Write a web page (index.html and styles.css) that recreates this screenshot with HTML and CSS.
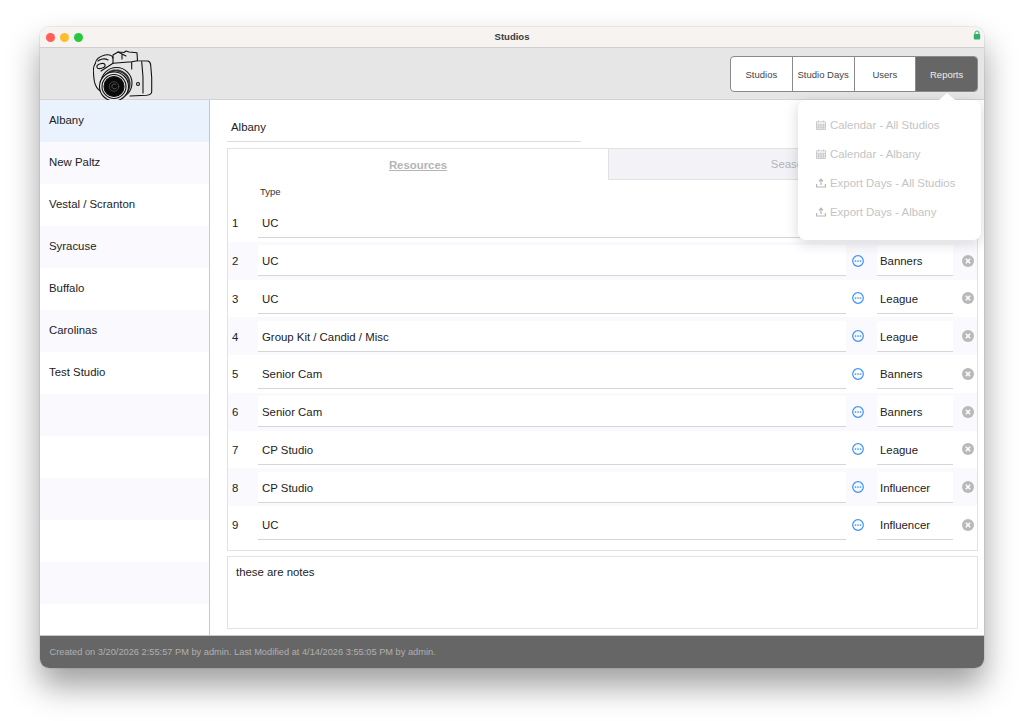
FILE: index.html
```html
<!DOCTYPE html>
<html lang="en">

<head>
    <meta charset="UTF-8">
    <meta name="viewport" content="width=device-width, initial-scale=1.0">
    <title>Studios</title>
    <link rel="stylesheet" href="styles.css">
</head>

<body>
    <div class="window">
        <div class="titlebar">
            <div class="lights">
                <span class="light red"></span>
                <span class="light yellow"></span>
                <span class="light green"></span>
            </div>
            <div class="window-title">Studios</div>
            <svg class="lock" viewBox="0 0 8 10" width="8" height="10">
                <path d="M2 4.5V3a2 2 0 0 1 4 0v1.5" fill="none" stroke="#2fb36b" stroke-width="1"/>
                <rect x="0.8" y="4" width="6.4" height="5.6" rx="1" fill="#2fb36b"/>
            </svg>
        </div>

        <div class="header">
            <svg class="logo" viewBox="0 0 60 50" width="60" height="50" fill="none" stroke="#111" stroke-width="1.1" stroke-linejoin="round" stroke-linecap="round">
                <path d="M20 8V5L25 2 31 2.500 33 1 36 2 44 2.700 44.500 10.700 55 11C57 11.500 57.500 13 57.700 15 58.800 24 59 34 58.700 41.700 58.500 44.500 56.500 45 53.700 45.200L37 46"/>
                <path d="M2.500 13C.5 16 0 19 .5 23 .8 28 1 32 2.500 35 4 38.500 6 40.500 8.700 41.700"/>
                <path d="M2.500 13C3 9 6 6.500 12 5 15 4.500 19 5 20 8L20 13.300"/>
                <path d="M5 11C7 9 12 8 15 10"/>
                <ellipse cx="8" cy="16" rx="4.200" ry="2.400" transform="rotate(-15 8 16)"/>
                <path d="M20 13.300L38.700 11.700 44.500 10.700M38.700 11.700V19M20 13.300L8 21"/>
                <path d="M25 2L33 6M29 4.500V9M48.700 11.500C50 22 50.500 32 50 43"/>
                <circle cx="23.500" cy="33" r="15.500"/>
                <circle cx="23" cy="34" r="13.500" stroke="#333" stroke-width="2.200" stroke-dasharray="0.800 0.800"/>
                <circle cx="21" cy="36.500" r="14.500" fill="#e6e6e6"/>
                <circle cx="21" cy="36.500" r="12"/>
                <circle cx="21" cy="36.500" r="10" fill="#0a0a0a"/>
                <circle cx="21" cy="36.500" r="4.800" stroke="#666" stroke-width="0.600"/>
                <path d="M23 34.500C21 33 18.500 34.500 19 37 19.500 39 22 39.500 23.500 38" stroke="#888" stroke-width="0.600"/>
                <circle cx="45" cy="34" r="1.500"/>
            </svg>
            <div class="nav">
                <div class="nav-btn">Studios</div>
                <div class="nav-btn">Studio Days</div>
                <div class="nav-btn">Users</div>
                <div class="nav-btn active">Reports</div>
            </div>
        </div>

        <div class="main">
            <div class="sidebar">
                <div class="studio selected">Albany</div>
                <div class="studio">New Paltz</div>
                <div class="studio">Vestal / Scranton</div>
                <div class="studio">Syracuse</div>
                <div class="studio">Buffalo</div>
                <div class="studio">Carolinas</div>
                <div class="studio">Test Studio</div>
                <div class="studio"></div>
                <div class="studio"></div>
                <div class="studio"></div>
                <div class="studio"></div>
                <div class="studio"></div>
            </div>

            <div class="content">
                <div class="name-field">Albany</div>

                <div class="panel">
                    <div class="tabs">
                        <div class="tab current">Resources</div>
                        <div class="tab">Seasons</div>
                    </div>
                    <div class="col-label">Type</div>
                    <div class="rows">
                        <div class="row">
                            <div class="num">1</div>
                            <div class="field">UC</div>
                        </div>
                        <div class="row">
                            <div class="num">2</div>
                            <div class="field">UC</div>
                            <svg class="more" viewBox="0 0 12 12"><circle cx="6" cy="6" r="5.300"/><path d="M3.500 6h.01M6 6h.01M8.500 6h.01"/></svg>
                            <div class="field">Banners</div>
                            <svg class="del" viewBox="0 0 12 12"><circle cx="6" cy="6" r="6"/><path d="M3.800 3.800l4.400 4.400M8.200 3.800l-4.400 4.400"/></svg>
                        </div>
                        <div class="row">
                            <div class="num">3</div>
                            <div class="field">UC</div>
                            <svg class="more" viewBox="0 0 12 12"><circle cx="6" cy="6" r="5.300"/><path d="M3.500 6h.01M6 6h.01M8.500 6h.01"/></svg>
                            <div class="field">League</div>
                            <svg class="del" viewBox="0 0 12 12"><circle cx="6" cy="6" r="6"/><path d="M3.800 3.800l4.400 4.400M8.200 3.800l-4.400 4.400"/></svg>
                        </div>
                        <div class="row">
                            <div class="num">4</div>
                            <div class="field">Group Kit / Candid / Misc</div>
                            <svg class="more" viewBox="0 0 12 12"><circle cx="6" cy="6" r="5.300"/><path d="M3.500 6h.01M6 6h.01M8.500 6h.01"/></svg>
                            <div class="field">League</div>
                            <svg class="del" viewBox="0 0 12 12"><circle cx="6" cy="6" r="6"/><path d="M3.800 3.800l4.400 4.400M8.200 3.800l-4.400 4.400"/></svg>
                        </div>
                        <div class="row">
                            <div class="num">5</div>
                            <div class="field">Senior Cam</div>
                            <svg class="more" viewBox="0 0 12 12"><circle cx="6" cy="6" r="5.300"/><path d="M3.500 6h.01M6 6h.01M8.500 6h.01"/></svg>
                            <div class="field">Banners</div>
                            <svg class="del" viewBox="0 0 12 12"><circle cx="6" cy="6" r="6"/><path d="M3.800 3.800l4.400 4.400M8.200 3.800l-4.400 4.400"/></svg>
                        </div>
                        <div class="row">
                            <div class="num">6</div>
                            <div class="field">Senior Cam</div>
                            <svg class="more" viewBox="0 0 12 12"><circle cx="6" cy="6" r="5.300"/><path d="M3.500 6h.01M6 6h.01M8.500 6h.01"/></svg>
                            <div class="field">Banners</div>
                            <svg class="del" viewBox="0 0 12 12"><circle cx="6" cy="6" r="6"/><path d="M3.800 3.800l4.400 4.400M8.200 3.800l-4.400 4.400"/></svg>
                        </div>
                        <div class="row">
                            <div class="num">7</div>
                            <div class="field">CP Studio</div>
                            <svg class="more" viewBox="0 0 12 12"><circle cx="6" cy="6" r="5.300"/><path d="M3.500 6h.01M6 6h.01M8.500 6h.01"/></svg>
                            <div class="field">League</div>
                            <svg class="del" viewBox="0 0 12 12"><circle cx="6" cy="6" r="6"/><path d="M3.800 3.800l4.400 4.400M8.200 3.800l-4.400 4.400"/></svg>
                        </div>
                        <div class="row">
                            <div class="num">8</div>
                            <div class="field">CP Studio</div>
                            <svg class="more" viewBox="0 0 12 12"><circle cx="6" cy="6" r="5.300"/><path d="M3.500 6h.01M6 6h.01M8.500 6h.01"/></svg>
                            <div class="field">Influencer</div>
                            <svg class="del" viewBox="0 0 12 12"><circle cx="6" cy="6" r="6"/><path d="M3.800 3.800l4.400 4.400M8.200 3.800l-4.400 4.400"/></svg>
                        </div>
                        <div class="row">
                            <div class="num">9</div>
                            <div class="field">UC</div>
                            <svg class="more" viewBox="0 0 12 12"><circle cx="6" cy="6" r="5.300"/><path d="M3.500 6h.01M6 6h.01M8.500 6h.01"/></svg>
                            <div class="field">Influencer</div>
                            <svg class="del" viewBox="0 0 12 12"><circle cx="6" cy="6" r="6"/><path d="M3.800 3.800l4.400 4.400M8.200 3.800l-4.400 4.400"/></svg>
                        </div>
                    </div>
                </div>

                <div class="notes">these are notes</div>
            </div>

            <!-- Reports menu, sits over the content -->
            <div class="menu">
                <div class="menu-item">
                    <svg class="menu-icon" viewBox="0 0 10 10"><path d="M.5 1.800h9v7.700h-9zM2.500 .5v2M7.500 .5v2M.5 4.200h9M.5 6h9M.5 7.800h9M2.700 4.200v5M5 4.200v5M7.300 4.200v5" fill="none" stroke="#c6c6c6" stroke-width="0.900"/></svg>
                    Calendar - All Studios
                </div>
                <div class="menu-item">
                    <svg class="menu-icon" viewBox="0 0 10 10"><path d="M.5 1.800h9v7.700h-9zM2.500 .5v2M7.500 .5v2M.5 4.200h9M.5 6h9M.5 7.800h9M2.700 4.200v5M5 4.200v5M7.300 4.200v5" fill="none" stroke="#c6c6c6" stroke-width="0.900"/></svg>
                    Calendar - Albany
                </div>
                <div class="menu-item">
                    <svg class="menu-icon" viewBox="0 0 10 10"><path d="M.6 6v3h8.800V6M5 7V1.500M3 3.400L5 1.200l2 2.200" fill="none" stroke="#b8b8b8" stroke-width="1.200"/></svg>
                    Export Days - All Studios
                </div>
                <div class="menu-item">
                    <svg class="menu-icon" viewBox="0 0 10 10"><path d="M.6 6v3h8.800V6M5 7V1.500M3 3.400L5 1.200l2 2.200" fill="none" stroke="#b8b8b8" stroke-width="1.200"/></svg>
                    Export Days - Albany
                </div>
            </div>
        </div>

        <div class="footer">Created on 3/20/2026 2:55:57 PM by admin. Last Modified at 4/14/2026 3:55:05 PM by admin.</div>
    </div>
</body>

</html>
```

FILE: styles.css
```css
body {
    font-family: "Liberation Sans", Arial, sans-serif;
    background-color: #fff;
    margin: 0;
    padding: 27px 40px 0;
    height: 721px;
    box-sizing: border-box;
    overflow: hidden;
}

.window {
    width: 944px;
    height: 641px;
    display: flex;
    flex-direction: column;
    border-radius: 9px;
    overflow: hidden;
    box-shadow: 0 0 0 1px rgba(0, 0, 0, 0.06), 0 18px 32px rgba(0, 0, 0, 0.38);
}

.titlebar {
    height: 21px;
    flex-shrink: 0;
    display: grid;
    grid-template-columns: 1fr auto 1fr;
    align-items: center;
    padding: 0 6px;
    box-sizing: border-box;
    background-color: #f6f3f0;
    border-bottom: 1px solid #cfcfcf;
}

.lights {
    display: flex;
    gap: 5px;
}

.light {
    width: 9px;
    height: 9px;
    border-radius: 50%;
}

.red { background-color: #ff5f57; }
.yellow { background-color: #febc2e; }
.green { background-color: #28c840; }

.window-title {
    margin-top: -2px;
    font-size: 9.5px;
    font-weight: bold;
    color: #3a3a3a;
}

.lock {
    display: block;
    justify-self: end;
    margin: -4px -3px 0 0;
}

.header {
    height: 52px;
    flex-shrink: 0;
    display: flex;
    align-items: center;
    justify-content: space-between;
    padding: 0 6px 0 53px;
    background-color: #e6e6e6;
    border-bottom: 1px solid #d2d2d2;
    box-sizing: border-box;
}

.logo {
    display: block;
    margin-top: 2px;
}

.nav {
    display: flex;
    width: 248px;
    height: 36px;
    margin-top: 1px;
    border: 1px solid #8a8a8a;
    border-radius: 4px;
    overflow: hidden;
    box-sizing: border-box;
    background-color: #fff;
}

.nav-btn {
    flex: 1;
    display: flex;
    justify-content: center;
    align-items: center;
    font-size: 9.5px;
    color: #444;
    border-right: 1px solid #8a8a8a;
}

.nav-btn.active {
    background-color: #666;
    color: #eee;
    border-right: none;
}

.main {
    flex: 1;
    min-height: 0;
    display: flex;
    position: relative;
    background-color: #fff;
}

.sidebar {
    width: 170px;
    flex-shrink: 0;
    border-right: 1px solid #c8c8c8;
    box-sizing: border-box;
    overflow: hidden;
}

.studio {
    height: 42px;
    padding: 14px 9px 0;
    box-sizing: border-box;
    font-size: 11.4px;
    color: #222;
}

.studio:nth-child(even) {
    background-color: #f9f9fe;
}

.studio.selected {
    background-color: #eaf2fe;
}

.content {
    flex: 1;
    min-width: 0;
    padding: 17px 6px 6px 17px;
    display: flex;
    flex-direction: column;
}

.name-field {
    width: 354px;
    height: 25px;
    padding: 4px 4px 0;
    box-sizing: border-box;
    font-size: 11.4px;
    color: #222;
    border-bottom: 1px solid #dcdcdc;
    margin-bottom: 6px;
}

.panel {
    height: 403px;
    border: 1px solid #e2e2e2;
    box-sizing: border-box;
}

.tabs {
    display: flex;
    height: 31px;
}

.tab {
    flex: 1;
    display: flex;
    justify-content: center;
    align-items: center;
    font-size: 11.4px;
    color: #b4b4b4;
    background-color: #f3f3f7;
    border-bottom: 1px solid #e2e2e2;
    border-left: 1px solid #e2e2e2;
}

.tab.current {
    flex: none;
    width: 380px;
    font-weight: bold;
    text-decoration: underline;
    background-color: #fff;
    border: none;
}

.col-label {
    height: 24px;
    padding: 6px 0 0 32px;
    box-sizing: border-box;
    font-size: 9.5px;
    color: #333;
}

.row {
    height: 37.75px;
    display: grid;
    grid-template-columns: 30px 588px 31px 76px 25px;
    align-items: center;
}

.row:nth-child(even) {
    background-color: #f9f9fe;
}

.num {
    padding: 1px 0 0 4px;
    font-size: 11.4px;
    color: #222;
}

.field {
    grid-column: 2;
    height: 31px;
    padding: 10px 4px 0;
    box-sizing: border-box;
    font-size: 11.4px;
    color: #222;
    background-color: #fff;
    border-bottom: 1px solid #d6d6d6;
}

.more {
    grid-column: 3;
    justify-self: start;
    width: 12px;
    height: 12px;
    margin-left: 6px;
    fill: none;
    stroke: #3b94f5;
    stroke-width: 1.2;
    stroke-linecap: round;
}

.more path {
    stroke-width: 1.7;
}

.field + .more + .field {
    grid-column: 4;
    padding-left: 3px;
}

.del {
    grid-column: 5;
    justify-self: start;
    width: 12px;
    height: 12px;
    margin-left: 9px;
    fill: #b9b9b9;
    stroke: none;
}

.del path {
    stroke: #fff;
    stroke-width: 1.5;
    fill: none;
}

.notes {
    height: 73px;
    margin-top: 5px;
    padding: 9px 8px;
    box-sizing: border-box;
    border: 1px solid #e2e2e2;
    font-size: 11.4px;
    color: #222;
}

.menu {
    position: absolute;
    top: 0;
    left: 758px;
    width: 183px;
    height: 140px;
    padding: 10px 0 0 18px;
    box-sizing: border-box;
    background-color: #fff;
    border-radius: 8px;
    box-shadow: 0 3px 14px rgba(0, 0, 0, 0.16);
}

.menu::before {
    content: "";
    position: absolute;
    top: -7px;
    left: 141px;
    border-left: 8px solid transparent;
    border-right: 8px solid transparent;
    border-bottom: 7px solid #fff;
}

.menu-item {
    height: 29px;
    display: flex;
    align-items: center;
    gap: 4px;
    font-size: 11.4px;
    color: #c4c4c4;
}

.menu-icon {
    width: 10px;
    height: 10px;
    flex-shrink: 0;
}

.footer {
    height: 33px;
    flex-shrink: 0;
    display: flex;
    align-items: center;
    padding-left: 9.5px;
    font-size: 9.25px;
    color: #b0b0b0;
    background-color: #666;
    border-top: 1px solid #c8c8c8;
    box-sizing: border-box;
}
```
